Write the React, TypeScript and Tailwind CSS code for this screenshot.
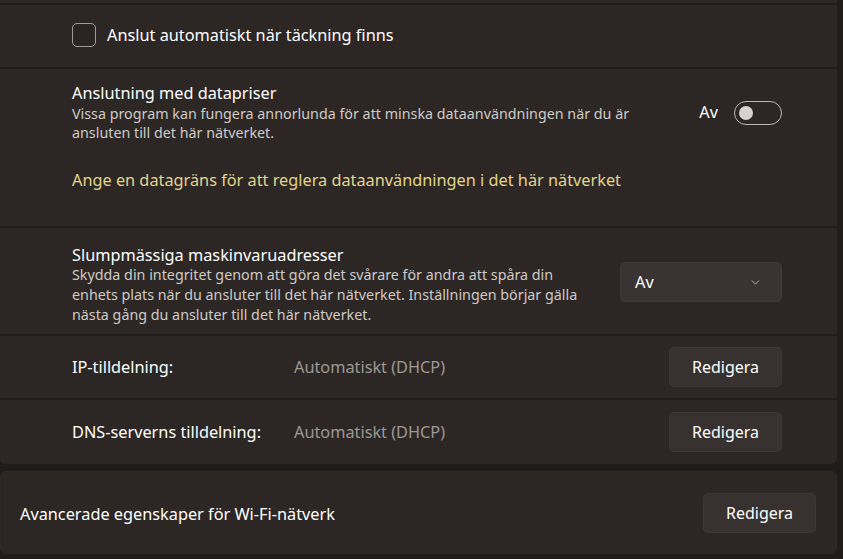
import { ChevronDown } from "lucide-react";

const font = { fontFamily: '"Noto Sans", "Open Sans", sans-serif' };

function EditButton({ className = "" }: { className?: string }) {
    return (
        <button className={`h-[40px] w-[113px] rounded-[5px] bg-[#37322f] border border-[#3d3835] text-[16px] text-white ${className}`}>
            Redigera
        </button>
    );
}

function Toggle() {
    return (
        <div className="w-[48px] h-[24px] rounded-full border border-[#bdb8b5] flex items-center px-[4px]">
            <div className="w-[14px] h-[14px] rounded-full bg-[#d6d2d0]" />
        </div>
    );
}

export default function App() {
    return (
        <div className="w-[843px] h-[559px] overflow-hidden bg-[#201c1b] pr-[6px] flex flex-col text-white" style={font}>
            <div className="flex flex-col gap-[2px] rounded-b-[6px] overflow-hidden">
                <div className="h-[3px] bg-[#2c2725]" />

                <div className="h-[62px] bg-[#2c2725] flex items-center pl-[72px] gap-[11px] pb-[3px]">
                    <div className="w-[24px] h-[24px] rounded-[5px] border border-[#a09b98] bg-[#2a2523]" />
                    <span className="text-[16.3px] leading-[22px]">Anslut automatiskt när täckning finns</span>
                </div>

                <div className="bg-[#2c2725] pl-[72px] pr-[55px] pt-[14px] pb-[35px]">
                    <div className="flex items-center justify-between">
                        <div className="flex flex-col">
                            <span className="text-[16.3px] leading-[21px]">Anslutning med datapriser</span>
                            <span className="text-[14.3px] leading-[19px] text-[#cfcac7] whitespace-nowrap">
                                Vissa program kan fungera annorlunda för att minska dataanvändningen när du är
                            </span>
                            <span className="text-[14.3px] leading-[19px] text-[#cfcac7]">ansluten till det här nätverket.</span>
                        </div>
                        <div className="flex items-center gap-[16px]">
                            <span className="text-[16.3px]">Av</span>
                            <Toggle />
                        </div>
                    </div>
                    <div className="mt-[27px] text-[16.3px] leading-[22px] text-[#e3d48c]">
                        Ange en datagräns för att reglera dataanvändningen i det här nätverket
                    </div>
                </div>

                <div className="bg-[#2c2725] pl-[72px] pr-[55px] pt-[17px] pb-[9px] flex items-start justify-between">
                    <div className="flex flex-col">
                        <span className="text-[16.3px] leading-[20px]">Slumpmässiga maskinvaruadresser</span>
                        <span className="text-[14.3px] leading-[20px] text-[#cfcac7] whitespace-nowrap">
                            Skydda din integritet genom att göra det svårare för andra att spåra din
                        </span>
                        <span className="text-[14.3px] leading-[20px] text-[#cfcac7] whitespace-nowrap">
                            enhets plats när du ansluter till det här nätverket. Inställningen börjar gälla
                        </span>
                        <span className="text-[14.3px] leading-[20px] text-[#cfcac7] whitespace-nowrap">
                            nästa gång du ansluter till det här nätverket.
                        </span>
                    </div>
                    <div className="mt-[17px] w-[162px] h-[40px] rounded-[5px] bg-[#393432] border border-[#3f3a37] flex items-center justify-between pl-[14px] pr-[19px]">
                        <span className="text-[16.3px]">Av</span>
                        <ChevronDown className="w-[13px] h-[13px] text-[#cfcac7]" strokeWidth={1.5} />
                    </div>
                </div>

                <div className="h-[62px] bg-[#2c2725] pl-[72px] pr-[55px] flex items-center">
                    <span className="w-[222px] text-[16.3px]">IP-tilldelning:</span>
                    <span className="flex-1 text-[16.3px] text-[#9e9896]">Automatiskt (DHCP)</span>
                    <EditButton />
                </div>

                <div className="h-[64px] bg-[#2c2725] pl-[72px] pr-[55px] flex items-center">
                    <span className="w-[222px] text-[16.3px]">DNS-serverns tilldelning:</span>
                    <span className="flex-1 text-[16.3px] text-[#9e9896]">Automatiskt (DHCP)</span>
                    <EditButton />
                </div>
            </div>

            <div className="mt-[7px] h-[83px] rounded-[6px] bg-[#2c2725] border border-[#2f2a28] pl-[19px] pr-[20px] pt-[3px] flex items-center justify-between">
                <span className="text-[16.3px]">Avancerade egenskaper för Wi-Fi-nätverk</span>
                <EditButton className="-mt-[3px]" />
            </div>
        </div>
    );
}
